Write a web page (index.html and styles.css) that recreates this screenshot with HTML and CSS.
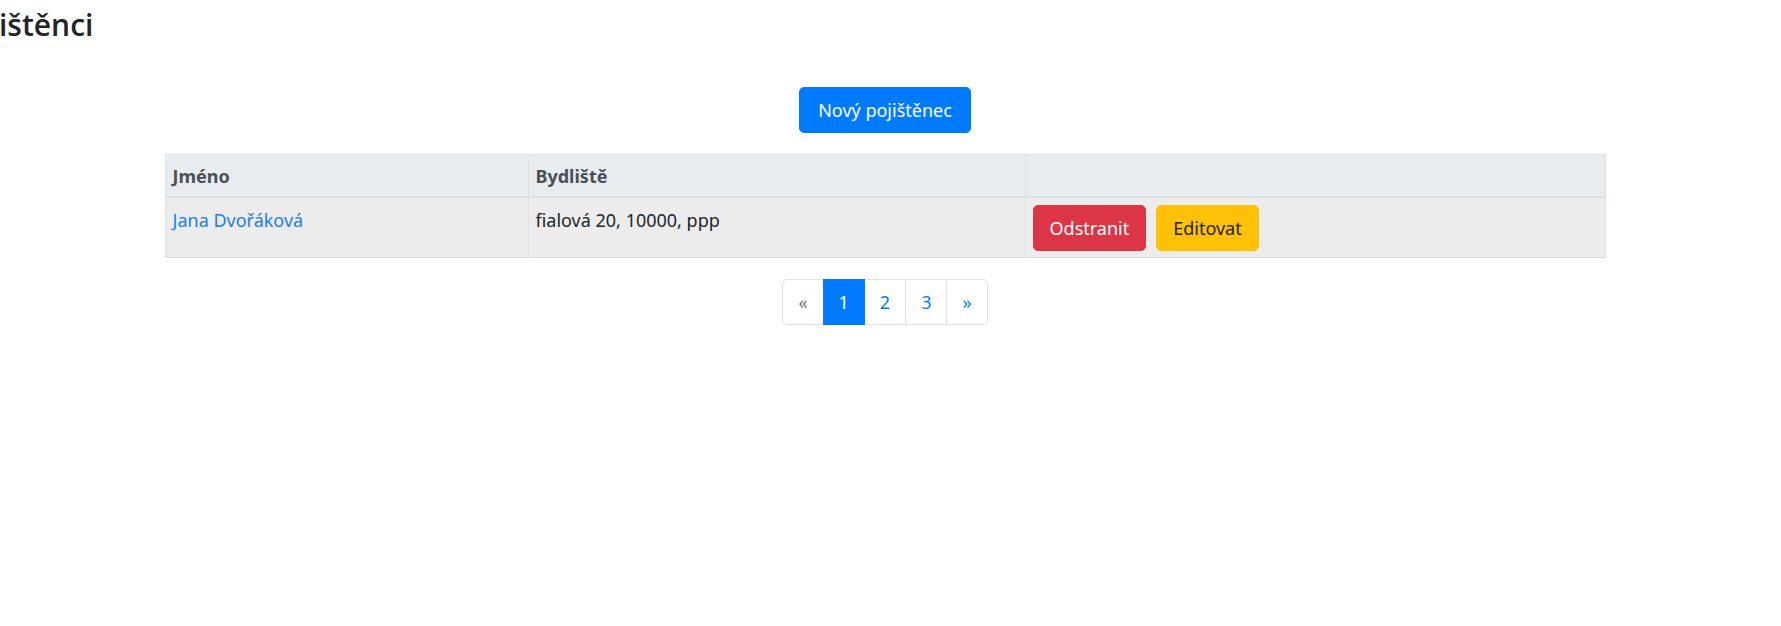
FILE: index.html
```html
<!DOCTYPE html>
<html lang="cs">
<head>
<meta charset="utf-8">
<title>Pojištěnci</title>
<link rel="stylesheet" href="styles.css">
</head>
<body>
<div class="page">
  <h3 class="title">ištěnci</h3>
  <div class="actions">
    <a class="btn btn-primary" href="#">Nový pojištěnec</a>
  </div>
  <table class="grid">
    <colgroup>
      <col class="c1"><col class="c2"><col class="c3">
    </colgroup>
    <thead>
      <tr><th>Jméno</th><th>Bydliště</th><th></th></tr>
    </thead>
    <tbody>
      <tr>
        <td><a class="link" href="#">Jana Dvořáková</a></td>
        <td>fialová 20, 10000, ppp</td>
        <td>
          <div class="row-actions">
            <a class="btn btn-danger" href="#">Odstranit</a>
            <a class="btn btn-warning" href="#">Editovat</a>
          </div>
        </td>
      </tr>
    </tbody>
  </table>
  <nav class="pager">
    <ul class="pagination">
      <li class="page-item disabled"><span class="page-link">«</span></li>
      <li class="page-item active"><span class="page-link">1</span></li>
      <li class="page-item"><a class="page-link" href="#">2</a></li>
      <li class="page-item"><a class="page-link" href="#">3</a></li>
      <li class="page-item"><a class="page-link" href="#">»</a></li>
    </ul>
  </nav>
</div>
</body>
</html>
```
FILE: styles.css
```css
html, body {
  margin: 0;
  padding: 0;
  background: #fff;
}
body {
  font-family: "Noto Sans", "Open Sans", sans-serif;
  font-size: 18px;
  line-height: 28px;
  color: #212529;
}
.page {
  width: 1770px;
}
.title {
  margin: 0;
  padding-top: 5px;
  font-family: "Open Sans", "Noto Sans", sans-serif;
  font-size: 30px;
  line-height: 40px;
  font-weight: 600;
  color: #212529;
  margin-left: -1px;
}
.actions {
  display: flex;
  justify-content: center;
  margin-top: 42px;
}
.btn {
  display: inline-block;
  padding: 8px 16px;
  border: 1px solid transparent;
  border-radius: 5px;
  line-height: 28px;
  font-size: 18px;
  text-decoration: none;
  white-space: nowrap;
}
.btn-primary {
  background: #007bff;
  border-color: #007bff;
  color: #fff;
  padding: 8px 18px;
}
.btn-danger {
  background: #dc3545;
  border-color: #dc3545;
  color: #fff;
}
.btn-warning {
  background: #ffc107;
  border-color: #ffc107;
  color: #212529;
}
.grid {
  margin: 21px auto 0;
  width: 1440px;
  border-collapse: collapse;
  table-layout: fixed;
  border: 1px solid #dee2e6;
}
.c1 { width: 363px; }
.c2 { width: 497px; }
.c3 { width: 580px; }
.grid th, .grid td {
  border: 1px solid #dee2e6;
  text-align: left;
  vertical-align: top;
}
.grid th {
  padding: 7px 7px 6px;
  background: #e9ecef;
  color: #495057;
  font-weight: 700;
  border-bottom: 2px solid #dee2e6;
}
.grid td {
  padding: 8px 7px 6px;
  background: #ececec;
}
.grid td:last-child {
  padding-top: 7px;
}
.link {
  color: #1a7cf5;
  text-decoration: none;
}
.row-actions {
  display: flex;
  gap: 10px;
  padding-left: 0;
}
.pager {
  display: flex;
  justify-content: center;
  margin-top: 21px;
}
.pagination {
  display: flex;
  list-style: none;
  margin: 0;
  padding: 0;
}
.page-item + .page-item {
  margin-left: -1px;
}
.page-link {
  display: block;
  padding: 8px 15px;
  line-height: 28px;
  border: 1px solid #dee2e6;
  background: #fff;
  color: #007bff;
  text-decoration: none;
}
.page-item:first-child .page-link {
  border-radius: 5px 0 0 5px;
}
.page-item:last-child .page-link {
  border-radius: 0 5px 5px 0;
}
.page-item.active .page-link {
  background: #007bff;
  border-color: #007bff;
  color: #fff;
  position: relative;
}
.page-item.disabled .page-link {
  color: #6c757d;
}
```
